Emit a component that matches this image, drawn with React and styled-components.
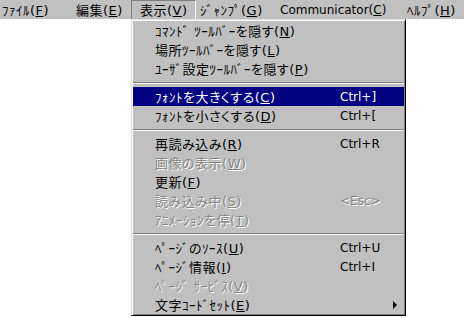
import React from "react";
import styled, { createGlobalStyle, css } from "styled-components";

const GlobalStyle = createGlobalStyle`
  html, body {
    margin: 0;
    padding: 0;
    background: #fff;
  }

  body {
    font-family: "DejaVu Sans", "Noto Sans CJK JP", sans-serif;
    font-size: 13px;
    letter-spacing: 0.5px;
    font-feature-settings: "palt";
  }
`;

const Screen = styled.div`
  position: relative;
  width: 464px;
  height: 318px;
  overflow: hidden;
  background: #fff;
`;

const MenuBar = styled.div`
  display: flex;
  height: 19px;
  background: #c0c0c0;
  color: #000;
`;

const BarItem = styled.div`
  box-sizing: border-box;
  flex: none;
  width: ${({ $w }) => $w}px;
  height: 19px;
  padding-top: 2px;
  padding-left: ${({ $pad }) => $pad}px;
  line-height: 17px;
  white-space: nowrap;

  ${({ $latin }) => $latin && css`
    font-size: 12px;
    letter-spacing: 0;
  `}

  ${({ $open }) => $open && css`
    padding-top: 1px;
    border-top: 1px solid #808080;
    border-left: 1px solid #808080;
    border-right: 1px solid #fff;
    padding-left: ${({ $pad }) => $pad - 1}px;
  `}
`;

const Dropdown = styled.div`
  position: absolute;
  left: 131px;
  top: 19px;
  width: 275px;
  box-sizing: border-box;
  padding: 1px 0;
  background: #c0c0c0;
  border: 1px solid;
  border-color: #dfdfdf #000 #000 #dfdfdf;
  box-shadow: inset 1px 1px 0 #fff, inset -1px -1px 0 #808080;
`;

const List = styled.div`
  margin: 0 1px;
`;

const Row = styled.div`
  display: grid;
  grid-template-columns: 1fr 52px 12px;
  align-items: center;
  height: 19px;
  padding-left: 22px;
  white-space: nowrap;
  color: #000;

  ${({ $disabled }) => $disabled && css`
    color: #868686;
    text-shadow: 1px 1px 0 #fff;
  `}

  ${({ $active }) => $active && css`
    background: #000080;
    color: #fff;
  `}
`;

const Shortcut = styled.span`
  font-size: 12px;
  letter-spacing: 0;
`;

const SubArrow = styled.span`
  width: 0;
  height: 0;
  margin-left: 1px;
  border-left: 4px solid #000;
  border-top: 4px solid transparent;
  border-bottom: 4px solid transparent;
`;

const Separator = styled.div`
  height: 0;
  margin: 4px 0 3px;
  border-top: 1px solid #808080;
  border-bottom: 1px solid #fff;
`;

const barItems = [
  { label: "ﾌｧｲﾙ", key: "F", w: 67, pad: 2 },
  { label: "編集", key: "E", w: 64, pad: 9 },
  { label: "表示", key: "V", w: 65, pad: 9, open: true },
  { label: "ｼﾞｬﾝﾌﾟ", key: "G", w: 75, pad: 4 },
  { label: "Communicator", key: "C", w: 127, pad: 9, latin: true },
  { label: "ﾍﾙﾌﾟ", key: "H", w: 66, pad: 9 },
];

const menu = [
  [
    { label: "ｺﾏﾝﾄﾞ ﾂｰﾙﾊﾞｰを隠す", key: "N" },
    { label: "場所ﾂｰﾙﾊﾞｰを隠す", key: "L" },
    { label: "ﾕｰｻﾞ設定ﾂｰﾙﾊﾞｰを隠す", key: "P" },
  ],
  [
    { label: "ﾌｫﾝﾄを大きくする", key: "C", shortcut: "Ctrl+]", active: true },
    { label: "ﾌｫﾝﾄを小さくする", key: "D", shortcut: "Ctrl+[" },
  ],
  [
    { label: "再読み込み", key: "R", shortcut: "Ctrl+R" },
    { label: "画像の表示", key: "W", disabled: true },
    { label: "更新", key: "F" },
    { label: "読み込み中", key: "S", shortcut: "<Esc>", disabled: true },
    { label: "ｱﾆﾒｰｼｮﾝを停", key: "T", disabled: true },
  ],
  [
    { label: "ﾍﾟｰｼﾞのｿｰｽ", key: "U", shortcut: "Ctrl+U" },
    { label: "ﾍﾟｰｼﾞ情報", key: "I", shortcut: "Ctrl+I" },
    { label: "ﾍﾟｰｼﾞ ｻｰﾋﾞｽ", key: "V", disabled: true },
    { label: "文字ｺｰﾄﾞｾｯﾄ", key: "E", submenu: true },
  ],
];

const Label = ({ label, hotkey }) => (
  <span>
    {label}(<u>{hotkey}</u>)
  </span>
);

export default function App() {
  return (
    <Screen>
      <GlobalStyle />
      <MenuBar>
        {barItems.map((item) => (
          <BarItem
            key={item.label}
            $w={item.w}
            $pad={item.pad}
            $open={item.open}
            $latin={item.latin}
          >
            <Label label={item.label} hotkey={item.key} />
          </BarItem>
        ))}
      </MenuBar>

      <Dropdown>
        <List>
          {menu.map((group, gi) => (
            <React.Fragment key={gi}>
              {gi > 0 && <Separator />}
              {group.map((item) => (
                <Row key={item.label} $active={item.active} $disabled={item.disabled}>
                  <Label label={item.label} hotkey={item.key} />
                  <Shortcut>{item.shortcut}</Shortcut>
                  {item.submenu ? <SubArrow /> : <span />}
                </Row>
              ))}
            </React.Fragment>
          ))}
        </List>
      </Dropdown>
    </Screen>
  );
}
